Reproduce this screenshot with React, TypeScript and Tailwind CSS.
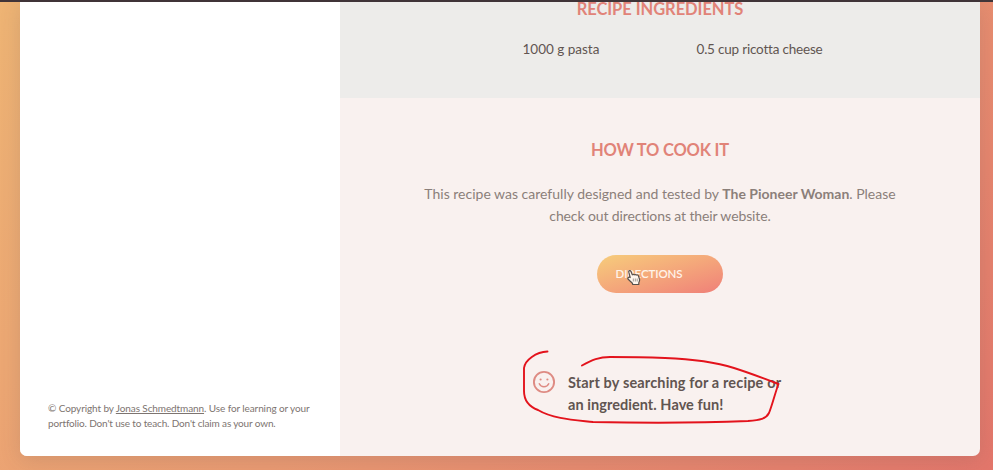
import React from 'react';

function Smile() {
  return (
    <svg className="-mt-0.5 h-6 w-6 shrink-0" viewBox="0 0 24 24" fill="none" stroke="#de8b83" strokeLinecap="round">
      <circle cx="12" cy="12" r="10.100" strokeWidth="1.900" />
      <path d="M7.300 13.700c1 2.200 2.700 3 4.700 3s3.700-.8 4.700-3" strokeWidth="1.500" />
      <circle cx="8.600" cy="9.500" r="1.100" fill="#de8b83" stroke="none" />
      <circle cx="15.400" cy="9.500" r="1.100" fill="#de8b83" stroke="none" />
    </svg>
  );
}

function Pointer() {
  return (
    <svg className="absolute left-[30px] top-[14px] h-[17px] w-[14px]" viewBox="0 0 14 17">
      <path
        d="M3.200 8.500 1.800 3.200C1.400 1.500 3.400.9 4 2.500l1.300 3.300c.5-.7 1.500-.7 2 0 .6-.5 1.500-.4 1.900.3.900-.5 2-.1 2.300.9l1 3.200c.4 1.700-.2 2.600-.7 3.500v1.800H5.700l-.3-1.300L1.200 10.300C.2 9 1.800 7.500 3.200 8.500Z"
        fill="#fff6ee"
        stroke="#59514c"
        strokeWidth="1.200"
        strokeLinejoin="round"
      />
      <path d="M6.300 9.500v3M8.300 9.500v3M10.200 9.500v3" stroke="#76706c" strokeWidth=".7" />
    </svg>
  );
}

function Annotation() {
  return (
    <svg
      className="pointer-events-none absolute left-[510px] top-[338px] h-[95px] w-[290px]"
      viewBox="510 340 290 95"
      fill="none"
      stroke="#e3131c"
      strokeWidth="1.900"
      strokeLinecap="round"
      strokeLinejoin="round"
    >
      <path d="M547.500 351.500C536 352 525 360 524 368V391C524 401 530 407 538 410C553 419 575 420 593 422C640 423 700 423 748 421C760 420 766 419 769 413C772 406 776 390 778.500 384C768 380 750 373 734 368C715 362 690 359 665 358C640 357 625 357 610 357C599 357 592 360 582 365.500" />
    </svg>
  );
}

export default function App() {
  return (
    <div className="relative h-[470px] w-[993px] overflow-hidden border-t-2 border-[#403438] bg-[linear-gradient(135deg,#eeb474_0%,#ea9a72_50%,#e3766b_100%)] font-['Lato',sans-serif] [font-variant-ligatures:none]">
      <main className="ml-5 flex h-[454px] w-[960px] rounded-b-[7px] bg-[#f9f1ef] shadow-[0_4px_20px_rgba(97,85,81,0.18)]">
        <aside className="flex w-80 flex-col justify-end rounded-bl-[7px] bg-white pb-[25px] pl-7">
          <p className="whitespace-nowrap text-[10px] leading-[15px] tracking-[-0.1px] text-[#7d7470]">
            © Copyright by <a className="underline">Jonas Schmedtmann</a>. Use for learning or your
            <br />
            <span className="tracking-[-0.150px]">portfolio. Don't use to teach. Don't claim as your own.</span>
          </p>
        </aside>
        <div className="flex flex-1 flex-col">
          <section className="h-24 bg-[#edecea]">
            <h2 className="text-center text-[16.500px] font-bold leading-[14px] tracking-[-0.050px] text-[#e18378]">RECIPE INGREDIENTS</h2>
            <ul className="flex pt-[23px] text-[13.500px] leading-5 text-[#615551]">
              <li className="ml-[182.500px] w-[174px]">1000 g pasta</li>
              <li className="tracking-[-0.200px]">0.5 cup ricotta cheese</li>
            </ul>
          </section>
          <section className="flex flex-col items-center pt-10">
            <h2 className="text-[16.500px] font-bold leading-6 tracking-[-0.200px] text-[#e18378]">HOW TO COOK IT</h2>
            <p className="mt-[21px] whitespace-nowrap text-center text-[14px] leading-[21.500px] text-[#8b7f7a]">
              This recipe was carefully designed and tested by <b>The Pioneer Woman</b>. Please
              <br />
              <span className="tracking-[-0.120px]">check out directions at their website.</span>
            </p>
            <a className="relative mt-[29px] flex h-[38px] w-[126px] items-center rounded-full bg-gradient-to-br from-[#f6cd7b] to-[#ef7f78] pb-px pl-[18.500px] text-[11.500px] font-semibold tracking-[-0.100px] text-[#fff3e9]">
              DIRECTIONS
              <Pointer />
            </a>
          </section>
          <div className="ml-48 mt-[79px] flex gap-3">
            <Smile />
            <p className="whitespace-nowrap text-[14.500px] font-bold leading-[22px] tracking-[0.150px] text-[#615551]">
              Start by searching for a recipe or
              <br />
              <span className="tracking-[0.050px]">an ingredient. Have fun!</span>
            </p>
          </div>
        </div>
      </main>
      <Annotation />
    </div>
  );
}
